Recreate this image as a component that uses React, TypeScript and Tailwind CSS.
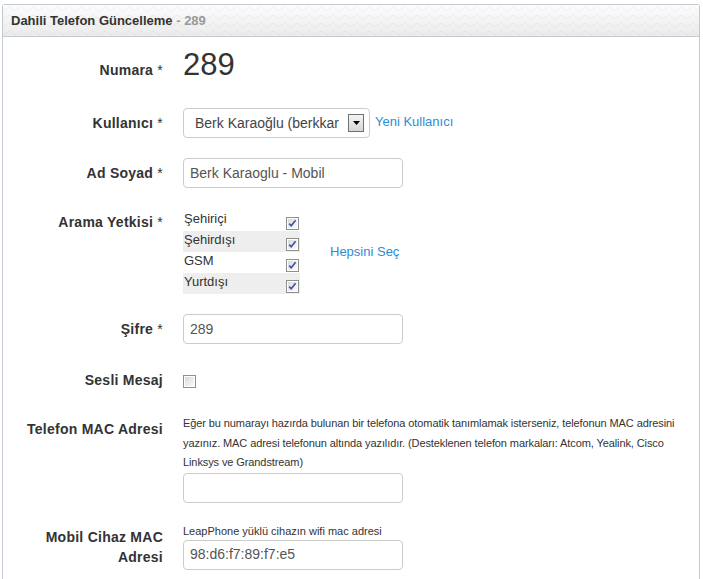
import React from 'react';

const Checkbox = ({ checked }: { checked?: boolean }) => (
  <svg width="13" height="13" viewBox="0 0 13 13" className="block shrink-0">
    <defs>
      <linearGradient id={checked ? 'cbOn' : 'cbOff'} x1="0" y1="0" x2="1" y2="1">
        <stop offset="0" stopColor="#d9dadc" />
        <stop offset="1" stopColor="#fbfbfb" />
      </linearGradient>
    </defs>
    <rect x="0.5" y="0.5" width="12" height="12" fill="#fff" stroke="#8f8f8f" />
    <rect x="2" y="2" width="9" height="9" fill={`url(#${checked ? 'cbOn' : 'cbOff'})`} />
    {checked && (
      <path d="M3.2 6.6 L5.2 8.8 L9.6 3.2" fill="none" stroke="#3f51a8" strokeWidth="1.6" />
    )}
  </svg>
);

const Label = ({ children, className = '' }: { children: React.ReactNode; className?: string }) => (
  <div className={`w-[160px] shrink-0 text-right text-[14px] leading-5 font-bold tracking-[0.25px] text-[#333] ${className}`}>
    {children}
  </div>
);

const Star = () => <span className="font-normal"> *</span>;

const TextInput = ({ value }: { value?: string }) => (
  <div className="w-[220px] h-[30px] border border-[#cccccc] rounded-[4px] bg-white flex items-center pl-[6px] text-[14px] text-[#555]">
    {value}
  </div>
);

const permissions = ['Şehiriçi', 'Şehirdışı', 'GSM', 'Yurtdışı'];

const App = () => {
  return (
    <div className="min-h-screen bg-white pt-[4px] pl-[2px] pr-[3px] font-['Liberation_Sans',Arial,sans-serif] text-[#333]">
      <div className="border border-[#c3cad1] border-b-0 rounded-t-[3px] min-h-[580px]">
        {/* Header */}
        <div className="relative h-[32px] border-b border-[#c3cad1] bg-[linear-gradient(to_bottom,#fcfcfc,#ebebeb)] flex items-center px-[8px] overflow-hidden">
          <svg className="absolute inset-0 w-full h-full" aria-hidden>
            <defs>
              <pattern id="zig" width="12" height="8" patternUnits="userSpaceOnUse">
                <path d="M0 6 L6 2 L12 6" fill="none" stroke="#000" strokeOpacity="0.035" strokeWidth="1" />
              </pattern>
            </defs>
            <rect width="100%" height="100%" fill="url(#zig)" />
          </svg>
          <span className="relative text-[13px] font-bold text-[#333]">
            Dahili Telefon Güncelleme <span className="text-[#999]">- 289</span>
          </span>
        </div>

        {/* Body */}
        <div className="pt-[10px]">
          {/* Numara */}
          <div className="flex items-baseline gap-[20px]">
            <Label>Numara<Star /></Label>
            <div className="text-[31px] leading-[36px] text-[#333]">289</div>
          </div>

          {/* Kullanıcı */}
          <div className="flex gap-[20px] mt-[25px]">
            <Label className="pt-[5px]">Kullanıcı<Star /></Label>
            <div className="flex items-center gap-[5px]">
              <div className="w-[187px] h-[30px] border border-[#cccccc] rounded-[4px] bg-white flex items-center pl-[11px] pr-[5px]">
                <div className="w-[150px] overflow-hidden whitespace-nowrap text-[14px] text-[#444]">
                  Berk Karaoğlu (berkkar
                </div>
                <div className="ml-auto w-[16px] h-[18px] border border-[#6f6f6f] bg-[linear-gradient(to_bottom,#f4f4f4,#d6d6d6)] flex items-center justify-center shrink-0">
                  <svg width="7" height="4" viewBox="0 0 7 4">
                    <path d="M0 0 H7 L3.5 4 Z" fill="#000" />
                  </svg>
                </div>
              </div>
              <a className="text-[13px] text-[#2d8cd3] -mt-[2px]">Yeni Kullanıcı</a>
            </div>
          </div>

          {/* Ad Soyad */}
          <div className="flex gap-[20px] mt-[20px]">
            <Label className="pt-[5px]">Ad Soyad<Star /></Label>
            <TextInput value="Berk Karaoglu - Mobil" />
          </div>

          {/* Arama Yetkisi */}
          <div className="flex gap-[20px] mt-[22px]">
            <Label className="pt-[2px]">Arama Yetkisi<Star /></Label>
            <div className="flex items-center gap-[30px]">
              <div className="w-[117px]">
                {permissions.map((p, i) => (
                  <div
                    key={p}
                    className={`h-[21px] flex items-center justify-between pl-[1px] pr-[1px] text-[13px] text-[#333] ${
                      i % 2 === 1 ? 'bg-[#eeeeee]' : ''
                    }`}
                  >
                    <span className="-mt-[3px]">{p}</span>
                    <span className="self-end mb-[1px]">
                      <Checkbox checked />
                    </span>
                  </div>
                ))}
              </div>
              <a className="text-[13px] text-[#2d8cd3]">Hepsini Seç</a>
            </div>
          </div>

          {/* Şifre */}
          <div className="flex gap-[20px] mt-[20px]">
            <Label className="pt-[5px]">Şifre<Star /></Label>
            <TextInput value="289" />
          </div>

          {/* Sesli Mesaj */}
          <div className="flex items-center gap-[20px] mt-[26px] h-[20px]">
            <Label>Sesli Mesaj</Label>
            <span className="mt-[2px]">
              <Checkbox />
            </span>
          </div>

          {/* Telefon MAC Adresi */}
          <div className="flex gap-[20px] mt-[24px]">
            <Label className="pt-[5px]">Telefon MAC Adresi</Label>
            <div>
              <p className="text-[11px] leading-[19.5px] text-[#333] tracking-[-0.1px] whitespace-nowrap">
                Eğer bu numarayı hazırda bulunan bir telefona otomatik tanımlamak isterseniz, telefonun MAC adresini
                <br />
                yazınız. MAC adresi telefonun altında yazılıdır. (Desteklenen telefon markaları: Atcom, Yealink, Cisco
                <br />
                Linksys ve Grandstream)
              </p>
              <TextInput />
            </div>
          </div>

          {/* Mobil Cihaz MAC Adresi */}
          <div className="flex gap-[20px] mt-[19px]">
            <Label className="pt-[5px]">Mobil Cihaz MAC Adresi</Label>
            <div>
              <p className="text-[11px] leading-[18px] text-[#333]">
                LeapPhone yüklü cihazın wifi mac adresi
              </p>
              <TextInput value="98:d6:f7:89:f7:e5" />
            </div>
          </div>
        </div>
      </div>
    </div>
  );
};

export default App;
